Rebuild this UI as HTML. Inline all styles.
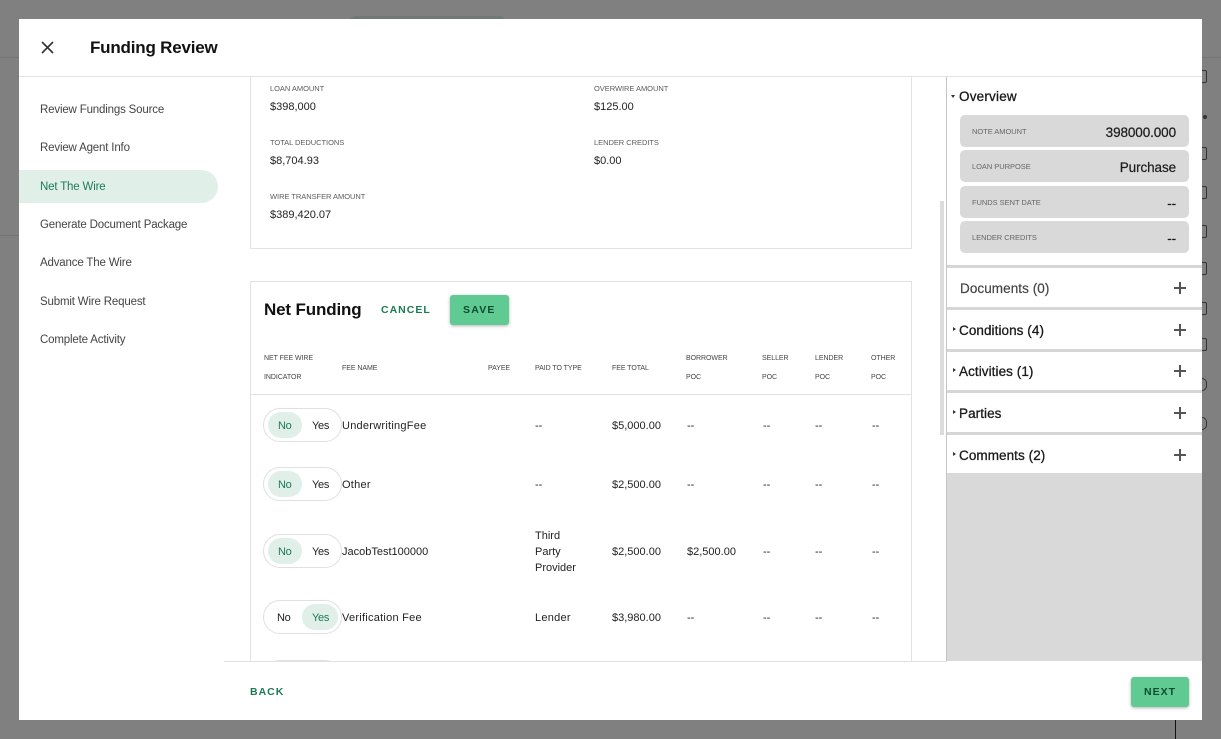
<!DOCTYPE html>
<html><head><meta charset="utf-8"><style>
html,body{margin:0;padding:0}
body{width:1221px;height:739px;overflow:hidden;background:#808080;position:relative;font-family:"Liberation Sans",sans-serif;color:#1c1c1c}
div,span{position:absolute;box-sizing:border-box}
.t{white-space:nowrap;line-height:16px;height:16px}
.nav{font-size:11.5px;color:#444;letter-spacing:-.17px;left:40px;margin-top:1px}
.lb{font-size:7.5px;color:#5c5c5c;letter-spacing:-.04px;margin-top:1px}
.v{font-size:11px;color:#222;margin-top:1px}
.th{font-size:7px;color:#444;letter-spacing:-.05px;margin-top:1px}
.td{font-size:11px;color:#222;margin-top:1px}
.w{letter-spacing:.25px}
.tg{left:263px;width:79px;height:34px;border:1px solid #e0e0e0;border-radius:17px;background:#fff}
.tg i{position:absolute;top:3px;width:34px;height:26px;border-radius:13px;background:#e0f0e9}
.tg b{position:absolute;top:10px;font-weight:400;font-size:11px;line-height:14px;color:#222;letter-spacing:-.3px}
.tg b.on{color:#1c7a55}
.box{left:960px;width:229px;height:32px;background:#d9d9d9;border-radius:5px}
.box .l{left:12px;top:10px;font-size:7.5px;color:#666;line-height:14px;white-space:nowrap;letter-spacing:-.04px}
.box .r{right:13px;top:9px;font-size:13.5px;color:#1a1a1a;line-height:18px;white-space:nowrap;letter-spacing:-.1px;-webkit-text-stroke:.2px #1a1a1a}
.sec{left:959px;font-size:13.5px;color:#1a1a1a;font-weight:400;letter-spacing:.07px;-webkit-text-stroke:.3px #1a1a1a}
.sep{left:947px;width:255px;height:3px;background:#d6d6d6}
.pl{left:1174px;width:12px;height:12px}
.pl:before{content:"";position:absolute;left:0;top:5px;width:12px;height:2px;background:#555}
.pl:after{content:"";position:absolute;left:5px;top:0;width:2px;height:12px;background:#555}
.ar{width:0;height:0;border-left:3px solid #333;border-top:2.5px solid transparent;border-bottom:2.5px solid transparent;left:953px}
.ic{left:1202px;width:5px;height:13px;border:1.5px solid #333;border-left:0;border-radius:0 2px 2px 0}
</style></head><body>
<div style="left:0;top:57px;width:1221px;height:1px;background:#757575"></div>
<div style="left:0;top:235px;width:19px;height:1px;background:#757575"></div>
<div style="left:348px;top:16px;width:159px;height:10px;border-radius:8px 8px 0 0;background:#6f7a75"></div>
<div style="left:1175px;top:720px;width:1px;height:19px;background:#111"></div>
<div class="ic" style="top:70px"></div>
<div style="left:1203px;top:115px;width:4px;height:4px;background:#333;border-radius:2px"></div>
<div class="ic" style="top:147px"></div>
<div class="ic" style="top:186px"></div>
<div class="ic" style="top:225px"></div>
<div class="ic" style="top:262px"></div>
<div class="ic" style="top:302px"></div>
<div class="ic" style="top:338px"></div>
<div class="ic" style="top:378px;border-radius:0 7px 7px 0"></div>
<div class="ic" style="top:417px;border-radius:0 7px 7px 0"></div>

<div style="left:19px;top:19px;width:1183px;height:701px;background:#fff"></div>
<div style="left:19px;top:76px;width:1183px;height:1px;background:#e2e2e2"></div>

<svg style="position:absolute;left:41px;top:41px" width="13" height="13" viewBox="0 0 13 13"><path d="M1 1L12 12M12 1L1 12" stroke="#333" stroke-width="1.6" fill="none"/></svg>
<div class="t" style="left:90px;top:38px;height:20px;line-height:20px;font-size:17px;font-weight:700;color:#111;letter-spacing:-.2px">Funding Review</div>

<div style="left:19px;top:170px;width:199px;height:33px;background:#e0f0e9;border-radius:0 17px 17px 0"></div>
<div class="t nav" style="top:101px">Review Fundings Source</div>
<div class="t nav" style="top:139px">Review Agent Info</div>
<div class="t nav" style="top:178px;color:#1c7a55">Net The Wire</div>
<div class="t nav" style="top:216px">Generate Document Package</div>
<div class="t nav" style="top:254px">Advance The Wire</div>
<div class="t nav" style="top:293px">Submit Wire Request</div>
<div class="t nav" style="top:331px">Complete Activity</div>

<div style="left:250px;top:70px;width:662px;height:179px;border:1px solid #e2e2e2;background:#fff"></div>
<div style="left:224px;top:70px;width:722px;height:7px;background:#fff"></div>
<div style="left:224px;top:76px;width:722px;height:1px;background:#e2e2e2"></div>
<div class="t lb" style="left:270px;top:80px">LOAN AMOUNT</div>
<div class="t v" style="left:270px;top:98px">$398,000</div>
<div class="t lb" style="left:594px;top:80px">OVERWIRE AMOUNT</div>
<div class="t v" style="left:594px;top:98px">$125.00</div>
<div class="t lb" style="left:270px;top:134px">TOTAL DEDUCTIONS</div>
<div class="t v" style="left:270px;top:152px">$8,704.93</div>
<div class="t lb" style="left:594px;top:134px">LENDER CREDITS</div>
<div class="t v" style="left:594px;top:152px">$0.00</div>
<div class="t lb" style="left:270px;top:188px">WIRE TRANSFER AMOUNT</div>
<div class="t v" style="left:270px;top:206px">$389,420.07</div>

<div style="left:250px;top:281px;width:662px;height:400px;border:1px solid #e2e2e2;background:#fff"></div>
<div class="t" style="left:264px;top:300px;height:20px;line-height:20px;font-size:17px;font-weight:700;color:#111;letter-spacing:-.15px">Net Funding</div>
<div class="t" style="left:381px;top:302px;font-size:10.5px;font-weight:700;color:#1c7a55;letter-spacing:1px">CANCEL</div>
<div style="left:450px;top:295px;width:59px;height:30px;background:#5fcb92;border-radius:3px;box-shadow:0 1px 3px rgba(0,0,0,.3)"></div>
<div class="t" style="left:463px;top:302px;font-size:10.5px;font-weight:700;color:#0f4a32;letter-spacing:1.2px">SAVE</div>

<div class="t th" style="left:264px;top:350px">NET FEE WIRE</div>
<div class="t th" style="left:264px;top:369px">INDICATOR</div>
<div class="t th" style="left:342px;top:360px">FEE NAME</div>
<div class="t th" style="left:488px;top:360px">PAYEE</div>
<div class="t th" style="left:535px;top:360px">PAID TO TYPE</div>
<div class="t th" style="left:612px;top:360px">FEE TOTAL</div>
<div class="t th" style="left:686px;top:350px">BORROWER</div>
<div class="t th" style="left:686px;top:369px">POC</div>
<div class="t th" style="left:762px;top:350px">SELLER</div>
<div class="t th" style="left:762px;top:369px">POC</div>
<div class="t th" style="left:815px;top:350px">LENDER</div>
<div class="t th" style="left:815px;top:369px">POC</div>
<div class="t th" style="left:871px;top:350px">OTHER</div>
<div class="t th" style="left:871px;top:369px">POC</div>
<div style="left:251px;top:394px;width:660px;height:1px;background:#e2e2e2"></div>

<div class="tg" style="top:408px"><i style="left:4px"></i><b class="on" style="left:14px">No</b><b style="left:48px">Yes</b></div>
<div class="t td w" style="left:342px;top:417px">UnderwritingFee</div>
<div class="t td" style="left:535px;top:417px">--</div>
<div class="t td" style="left:612px;top:417px">$5,000.00</div>
<div class="t td" style="left:687px;top:417px">--</div>
<div class="t td" style="left:763px;top:417px">--</div>
<div class="t td" style="left:815px;top:417px">--</div>
<div class="t td" style="left:872px;top:417px">--</div>

<div class="tg" style="top:467px"><i style="left:4px"></i><b class="on" style="left:14px">No</b><b style="left:48px">Yes</b></div>
<div class="t td w" style="left:342px;top:476px">Other</div>
<div class="t td" style="left:535px;top:476px">--</div>
<div class="t td" style="left:612px;top:476px">$2,500.00</div>
<div class="t td" style="left:687px;top:476px">--</div>
<div class="t td" style="left:763px;top:476px">--</div>
<div class="t td" style="left:815px;top:476px">--</div>
<div class="t td" style="left:872px;top:476px">--</div>

<div class="tg" style="top:534px"><i style="left:4px"></i><b class="on" style="left:14px">No</b><b style="left:48px">Yes</b></div>
<div class="t td" style="left:342px;top:543px">JacobTest100000</div>
<div class="t td" style="left:535px;top:527px">Third</div>
<div class="t td" style="left:535px;top:543px">Party</div>
<div class="t td" style="left:535px;top:559px">Provider</div>
<div class="t td" style="left:612px;top:543px">$2,500.00</div>
<div class="t td" style="left:687px;top:543px">$2,500.00</div>
<div class="t td" style="left:763px;top:543px">--</div>
<div class="t td" style="left:815px;top:543px">--</div>
<div class="t td" style="left:872px;top:543px">--</div>

<div class="tg" style="top:600px"><i style="left:38px;width:36px"></i><b style="left:13px">No</b><b class="on" style="left:48px">Yes</b></div>
<div class="t td w" style="left:342px;top:609px">Verification Fee</div>
<div class="t td w" style="left:535px;top:609px">Lender</div>
<div class="t td" style="left:612px;top:609px">$3,980.00</div>
<div class="t td" style="left:687px;top:609px">--</div>
<div class="t td" style="left:763px;top:609px">--</div>
<div class="t td" style="left:815px;top:609px">--</div>
<div class="t td" style="left:872px;top:609px">--</div>

<div class="tg" style="top:660px"></div>

<div style="left:224px;top:661px;width:723px;height:59px;background:#fff;border-top:1px solid #e2e2e2"></div>
<div class="t" style="left:250px;top:684px;font-size:10.5px;font-weight:700;color:#1c7a55;letter-spacing:1px">BACK</div>

<div style="left:940px;top:201px;width:4px;height:234px;background:#dcdcdc"></div>
<div style="left:946px;top:77px;width:1px;height:584px;background:#c4c4c4"></div>

<div style="left:947px;top:473px;width:255px;height:188px;background:#d9d9d9"></div>
<div style="left:951px;top:95px;width:0;height:0;border-top:3px solid #333;border-left:2.5px solid transparent;border-right:2.5px solid transparent"></div>
<div class="t sec" style="top:89px;letter-spacing:.2px">Overview</div>

<div class="box" style="top:115px"><span class="l">NOTE AMOUNT</span><span class="r">398000.000</span></div>
<div class="box" style="top:150px"><span class="l">LOAN PURPOSE</span><span class="r">Purchase</span></div>
<div class="box" style="top:186px"><span class="l">FUNDS SENT DATE</span><span class="r">--</span></div>
<div class="box" style="top:221px"><span class="l">LENDER CREDITS</span><span class="r">--</span></div>

<div class="sep" style="top:265px"></div>
<div class="sep" style="top:307px"></div>
<div class="sep" style="top:349px"></div>
<div class="sep" style="top:390px"></div>
<div class="sep" style="top:432px"></div>

<div class="t sec" style="left:960px;top:281px;color:#444;-webkit-text-stroke:.2px #444">Documents (0)</div>
<div class="pl" style="top:282px"></div>
<div class="ar" style="top:327px"></div>
<div class="t sec" style="top:323px">Conditions (4)</div>
<div class="pl" style="top:324px"></div>
<div class="ar" style="top:368px"></div>
<div class="t sec" style="top:364px">Activities (1)</div>
<div class="pl" style="top:365px"></div>
<div class="ar" style="top:410px"></div>
<div class="t sec" style="top:406px">Parties</div>
<div class="pl" style="top:407px"></div>
<div class="ar" style="top:452px"></div>
<div class="t sec" style="top:448px">Comments (2)</div>
<div class="pl" style="top:449px"></div>

<div style="left:1131px;top:677px;width:58px;height:30px;background:#5fcb92;border-radius:3px;box-shadow:0 1px 3px rgba(0,0,0,.3)"></div>
<div class="t" style="left:1144px;top:684px;font-size:10.5px;font-weight:700;color:#0f4a32;letter-spacing:1px">NEXT</div>
</body></html>
